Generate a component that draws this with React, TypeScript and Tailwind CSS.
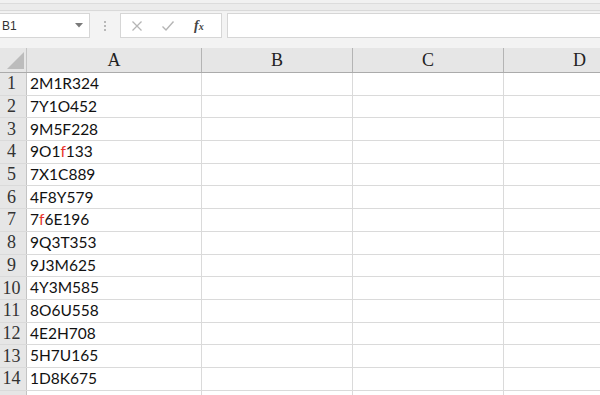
import React from 'react';

const rows: { n: number; v: React.ReactNode }[] = [
  { n: 1, v: '2M1R324' },
  { n: 2, v: '7Y1O452' },
  { n: 3, v: '9M5F228' },
  { n: 4, v: <>9O1<span className="text-[#e8322b]">f</span>133</> },
  { n: 5, v: '7X1C889' },
  { n: 6, v: '4F8Y579' },
  { n: 7, v: <>7<span className="text-[#e8322b]">f</span>6E196</> },
  { n: 8, v: '9Q3T353' },
  { n: 9, v: '9J3M625' },
  { n: 10, v: '4Y3M585' },
  { n: 11, v: '8O6U558' },
  { n: 12, v: '4E2H708' },
  { n: 13, v: '5H7U165' },
  { n: 14, v: '1D8K675' },
  { n: 15, v: '' },
];

const serif = { fontFamily: '"Liberation Serif", "DejaVu Serif", serif' };

export default function App(): JSX.Element {
  return (
    <div
      className="w-[600px] h-[395px] overflow-hidden bg-white flex flex-col"
      style={{ fontFamily: 'Lato, "Liberation Sans", sans-serif' }}
    >
      {/* ribbon edge */}
      <div className="h-[12px] shrink-0 bg-[#f1f1f1] flex flex-col">
        <div className="h-[3px]" />
        <div className="h-px bg-[#dcdcdc]" />
        <div className="h-[6px] bg-[#ebebeb]" />
        <div className="h-px bg-[#d9d9d9]" />
      </div>

      {/* formula bar */}
      <div className="h-[36px] shrink-0 bg-[#f3f3f3] flex items-start pt-[1px]">
        <div className="w-[90px] h-[25px] bg-white border border-[#d6d6d6] border-l-0 flex items-center justify-between pl-[2px] pr-[6px]">
          <span className="text-[12px] text-[#333]" style={{ fontFamily: '"Liberation Sans", sans-serif' }}>B1</span>
          <svg width="8" height="5" viewBox="0 0 8 5">
            <path d="M0 0 L8 0 L4 4.5 Z" fill="#7a7a7a" />
          </svg>
        </div>
        <div className="w-[30px] h-[25px] flex items-center justify-center">
          <div className="flex flex-col gap-[2px]">
            <span className="w-[2px] h-[2px] bg-[#b8b8b8]" />
            <span className="w-[2px] h-[2px] bg-[#b8b8b8]" />
            <span className="w-[2px] h-[2px] bg-[#b8b8b8]" />
          </div>
        </div>
        <div className="w-[102px] h-[25px] bg-white border border-[#d6d6d6] flex items-center pl-[10px] gap-[18px]">
          <svg width="12" height="12" viewBox="0 0 12 12">
            <path d="M1.5 1.5 L10.5 10.5 M10.5 1.5 L1.5 10.5" stroke="#b5b5b5" strokeWidth="1.3" />
          </svg>
          <svg width="14" height="12" viewBox="0 0 14 12">
            <path d="M1.5 6.5 L5 10 L12.5 1.5" stroke="#b5b5b5" strokeWidth="1.4" fill="none" />
          </svg>
          <span className="text-[14px] italic font-bold text-[#444] ml-[1px]" style={serif}>
            f<span className="text-[10px]">x</span>
          </span>
        </div>
        <div className="w-[5px]" />
        <div className="flex-1 h-[25px] bg-white border border-[#d6d6d6] border-r-0" />
      </div>

      {/* column headers */}
      <div className="h-[25px] shrink-0 bg-[#e6e6e6] flex border-b border-[#ababab] text-[#222]" style={serif}>
        <div className="w-[27px] shrink-0 relative border-r border-[#c4c4c4]">
          <svg className="absolute left-[7px] top-[4px]" width="17" height="17" viewBox="0 0 17 17">
            <path d="M17 0 L17 17 L0 17 Z" fill="#bcbcbc" />
          </svg>
        </div>
        <div className="w-[175px] shrink-0 flex items-center justify-center text-[18px] border-r border-[#b4b4b4]">A</div>
        <div className="w-[151px] shrink-0 flex items-center justify-center text-[18px] border-r border-[#b4b4b4]">B</div>
        <div className="w-[151px] shrink-0 flex items-center justify-center text-[18px] border-r border-[#b4b4b4]">C</div>
        <div className="w-[151px] shrink-0 flex items-center justify-center text-[18px]">D</div>
      </div>

      {/* rows */}
      <div className="flex flex-col">
        {rows.map((r) => (
          <div key={r.n} className="h-[22.7px] flex shrink-0 border-b border-[#dadada]">
            <div
              className="w-[27px] shrink-0 bg-[#e6e6e6] border-r border-[#c4c4c4] flex items-center justify-center pr-[3px] text-[18px] text-[#333]"
              style={serif}
            >
              {r.v === '' ? '' : r.n}
            </div>
            <div className="w-[175px] shrink-0 border-r border-[#dadada] flex items-center pl-[3px] text-[15.5px] text-[#111]">
              {r.v}
            </div>
            <div className="w-[151px] shrink-0 border-r border-[#dadada]" />
            <div className="w-[151px] shrink-0 border-r border-[#dadada]" />
            <div className="w-[151px] shrink-0" />
          </div>
        ))}
      </div>
    </div>
  );
}
